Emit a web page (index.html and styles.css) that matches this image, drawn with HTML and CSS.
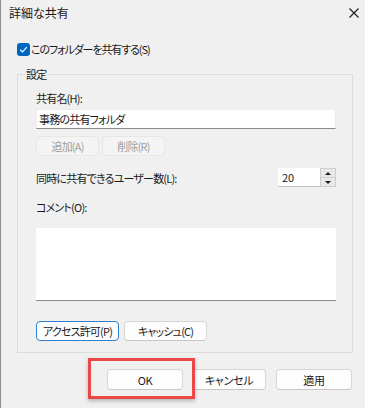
FILE: index.html
```html
<!DOCTYPE html>
<html lang="ja">
<head>
  <meta charset="UTF-8" />
  <meta name="viewport" content="width=device-width, initial-scale=1.0"/>
  <title>詳細な共有</title>
  <link rel="stylesheet" href="styles.css">
</head>
<body>
  <div class="window">
    <div class="titlebar">
      <span class="title">詳細な共有</span>
      <svg class="close" width="10" height="10" viewBox="0 0 10 10">
        <path d="M0.5 0.5 L9.5 9.5 M9.5 0.5 L0.5 9.5" stroke="#1b1b1b" stroke-width="1.1" fill="none"/>
      </svg>
    </div>

    <div class="content">
      <label class="share-check">
        <span class="checkbox">
          <svg width="9" height="9" viewBox="0 0 9 9">
            <path d="M1.3 4.8 L3.5 6.9 L7.8 2.2" stroke="#fff" stroke-width="1.2" fill="none"/>
          </svg>
        </span>
        <span class="check-text">このフォルダーを共有する(S)</span>
      </label>

      <fieldset class="group">
        <legend>設定</legend>

        <div class="field-label">共有名(H):</div>
        <div class="textbox">事務の共有フォルダ</div>

        <div class="btn-row">
          <button class="btn disabled">追加(A)</button>
          <button class="btn disabled">削除(R)</button>
        </div>

        <div class="users-row">
          <span>同時に共有できるユーザー数(L):</span>
          <div class="spinner">
            <div class="spin-value">20</div>
            <div class="spin-arrows">
              <div class="arrow up"></div>
              <div class="arrow down"></div>
            </div>
          </div>
        </div>

        <div class="field-label comment-label">コメント(O):</div>
        <div class="textarea"></div>

        <div class="btn-row perm-row">
          <button class="btn focused">アクセス許可(P)</button>
          <button class="btn cache">キャッシュ(C)</button>
        </div>
      </fieldset>

      <div class="footer">
        <div class="ok-wrap">
          <button class="btn dialog-btn">OK</button>
          <div class="highlight"></div>
        </div>
        <button class="btn dialog-btn cancel">キャンセル</button>
        <button class="btn dialog-btn apply">適用</button>
      </div>
    </div>
  </div>
</body>
</html>
```

FILE: styles.css
```css
* {
  box-sizing: border-box;
}

body {
  margin: 0;
  background: #f0f0f0;
  font-family: "Noto Sans CJK JP", "Noto Sans", sans-serif;
  font-size: 11px;
  line-height: 16px;
  letter-spacing: -0.8px;
  color: #1a1a1a;
  font-feature-settings: "palt";
}

.window {
  height: 408px;
  border-left: 1px solid #8e8e8e;
  overflow: hidden;
}

.titlebar {
  display: flex;
  justify-content: space-between;
  align-items: center;
  height: 26px;
  padding: 0 6px 0 8px;
}

.title {
  font-size: 12px;
  letter-spacing: 0;
}

.close {
  display: block;
}

.content {
  padding: 0 12px 0 16px;
}

.share-check {
  display: flex;
  align-items: center;
  gap: 1px;
  margin-top: 15px;
  height: 16px;
}

.check-text {
  letter-spacing: -1.1px;
}

.checkbox {
  width: 13px;
  height: 13px;
  border-radius: 3px;
  background: #0067c0;
  display: flex;
  align-items: center;
  justify-content: center;
}

.checkbox svg {
  display: block;
}

.group {
  margin: 9px 0 0 0;
  padding: 0 16px 11px 18px;
  border: 1px solid #dcdcdc;
  min-width: 0;
}

.group legend {
  margin-left: -11px;
  padding: 0 1px;
  line-height: 16px;
}

.field-label {
  margin-top: 8px;
}

.textbox {
  margin-top: 3px;
  height: 20px;
  background: #fff;
  border: 1px solid #ececec;
  border-bottom-color: #8a8a8a;
  padding: 1px 2px;
}

.btn {
  font-family: inherit;
  font-size: 11px;
  line-height: 16px;
  letter-spacing: inherit;
  color: #1a1a1a;
  background: #fdfdfd;
  border: 1px solid #d6d6d6;
  border-bottom-color: #c6c6c6;
  border-radius: 4px;
  padding: 0;
  height: 21px;
  white-space: nowrap;
  font-feature-settings: "palt";
}

.btn-row {
  display: flex;
  gap: 3px;
  margin-top: 7px;
}

.btn-row .btn {
  width: 63px;
  height: 20px;
}

.btn.disabled {
  color: #a0a0a0;
  background: #f4f4f4;
  border-color: #e6e6e6;
}

.users-row {
  display: flex;
  justify-content: space-between;
  align-items: center;
  margin-top: 12px;
}

.spinner {
  display: flex;
  height: 19px;
}

.spin-value {
  width: 42px;
  background: #fff;
  border-bottom: 1px solid #c4c4c4;
  padding: 2px 4px;
  line-height: 15px;
  letter-spacing: 0;
}

.spin-arrows {
  width: 16px;
  display: flex;
  flex-direction: column;
  gap: 1px;
  background: #cfcfcf;
  border: 1px solid #cfcfcf;
}

.arrow {
  flex: 1;
  background: #e9e9e9;
  display: flex;
  align-items: center;
  justify-content: center;
}

.arrow::after {
  content: "";
  border-left: 3px solid transparent;
  border-right: 3px solid transparent;
}

.arrow.up::after {
  border-bottom: 3px solid #1a1a1a;
}

.arrow.down::after {
  border-top: 3px solid #1a1a1a;
}

.comment-label {
  margin-top: 12px;
}

.textarea {
  margin-top: 13px;
  height: 73px;
  background: #fff;
  border-bottom: 1px solid #8a8a8a;
}

.perm-row {
  gap: 5px;
  margin-top: 20px;
}

.perm-row .btn {
  width: 83px;
  height: 20px;
}

.btn.focused {
  border-color: #2f7fd0;
}

.footer {
  display: flex;
  justify-content: flex-end;
  align-items: center;
  margin-top: 16px;
  padding-right: 1px;
}

.ok-wrap {
  position: relative;
}

.dialog-btn {
  display: block;
  width: 76px;
  letter-spacing: -0.3px;
}

.cancel {
  width: 74px;
  margin-left: 9px;
}

.apply {
  margin-left: 10px;
}

.highlight {
  position: absolute;
  left: -19px;
  top: -11px;
  right: -12px;
  bottom: -9px;
  border: 3px solid #ec4747;
  box-shadow: 0 2px 4px rgba(0, 0, 0, 0.25);
}
```
